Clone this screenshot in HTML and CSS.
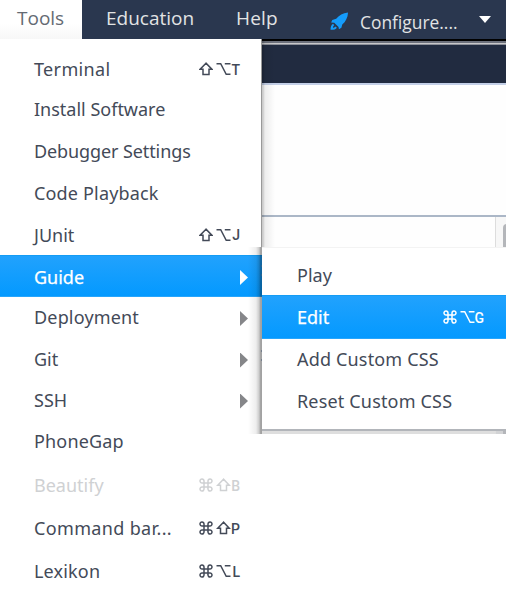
FILE: index.html
```html
<!DOCTYPE html>
<html lang="en">
<head>
<meta charset="utf-8">
<title>Tools menu</title>
<link rel="stylesheet" href="styles.css">
</head>
<body>
<svg class="defs" aria-hidden="true">
  <symbol id="shift" viewBox="0 0 14 14"><path d="M7 1.2 1.2 7.2H4V12.6H10V7.2H12.8Z"/></symbol>
  <symbol id="option" viewBox="0 0 15 14"><path d="M.5 1.7H4.7L10.2 12.3H14.5M8.8 1.7H14.5"/></symbol>
  <symbol id="command" viewBox="0 0 14 14"><path d="M5 5H3.1A2 2 0 1 1 5 3.1V10.9A2 2 0 1 1 3.1 9H10.9A2 2 0 1 1 9 10.9V3.1A2 2 0 1 1 10.9 5Z"/></symbol>
</svg>
<header class="bar">
  <div class="tab active">Tools</div>
  <div class="tab education">Education</div>
  <div class="tab help">Help</div>
  <div class="config">
    <svg class="rocket" viewBox="0 0 20 20"><path d="M19 .5C13.5 1 9.5 3.5 6.5 7.2L2.4 8.3 1.2 11 4.5 11.2 9 15.7 9.4 18.2 12 16.6 12.9 13.2C16.5 10 18.7 6 19 .5Z"/><path d="M3.2 12.4C1.2 13.5.5 16 .6 18.8 3.7 18.9 6 18.5 7.3 16.5L5.6 15.2C5 16.2 4.2 16.5 3.2 16.5 3.2 15.5 3.5 14.7 4.5 14Z"/></svg>
    <span class="title">Configure....</span>
    <i class="caret"></i>
  </div>
</header>
<main class="workspace">
  <div class="rule"></div>
  <div class="toolbar"></div>
  <div class="pane"></div>
  <div class="editor"><div class="track"><i class="thumb"></i></div></div>
</main>
<nav class="menu">
  <div class="row"><span class="label loose">Terminal</span><span class="keys"><svg><use href="#shift"/></svg><svg><use href="#option"/></svg><b>T</b></span></div>
  <div class="row"><span class="label">Install Software</span></div>
  <div class="row"><span class="label tight">Debugger Settings</span></div>
  <div class="row"><span class="label airy">Code Playback</span></div>
  <div class="row"><span class="label low">JUnit</span><span class="keys"><svg><use href="#shift"/></svg><svg><use href="#option"/></svg><b>J</b></span></div>
  <div class="row selected"><span class="label">Guide</span><i class="arrow"></i></div>
  <div class="row"><span class="label airy">Deployment</span><i class="arrow"></i></div>
  <div class="row"><span class="label">Git</span><i class="arrow"></i></div>
  <div class="row"><span class="label">SSH</span><i class="arrow"></i></div>
  <div class="row"><span class="label airy">PhoneGap</span></div>
  <div class="row disabled"><span class="label">Beautify</span><span class="keys"><svg><use href="#command"/></svg><svg><use href="#shift"/></svg><b>B</b></span></div>
  <div class="row"><span class="label loose">Command bar...</span><span class="keys"><svg><use href="#command"/></svg><svg><use href="#shift"/></svg><b>P</b></span></div>
  <div class="row"><span class="label airy">Lexikon</span><span class="keys"><svg><use href="#command"/></svg><svg><use href="#option"/></svg><b>L</b></span></div>
</nav>
<div class="shade"><i class="mark"></i><i class="mark"></i></div>
<nav class="submenu">
  <div class="row"><span class="label low">Play</span></div>
  <div class="row selected"><span class="label">Edit</span><span class="keys"><svg><use href="#command"/></svg><svg><use href="#option"/></svg><b>G</b></span></div>
  <div class="row"><span class="label airy">Add Custom CSS</span></div>
  <div class="row"><span class="label airy">Reset Custom CSS</span></div>
</nav>
</body>
</html>
```

FILE: styles.css
```css
* { box-sizing: border-box; }
body {
  margin: 0;
  width: 506px;
  height: 590px;
  position: relative;
  overflow: hidden;
  background: #fff;
  color: #434a58;
  font: 18px/24px "Noto Sans", "Open Sans", sans-serif;
}
.defs { position: absolute; width: 0; height: 0; }

.bar { display: flex; height: 39px; background: #2a374f; color: #e2e3e4; font-family: "Open Sans", sans-serif; font-size: 19px; }
.tab { padding-top: 6px; white-space: nowrap; }
.active { width: 82px; padding-left: 17px; background: linear-gradient(#fff 60%, #f7f7f7); color: #646a73; }
.education { width: 154px; padding-left: 24px; }
.help { width: 94px; letter-spacing: .2px; }
.config { display: flex; padding-top: 10px; white-space: nowrap; }
.rocket { width: 19px; height: 19px; margin: 2px 11px 0 0; fill: #159cfb; }
.title { width: 119px; transform: scaleX(.915); transform-origin: left; }
.caret { width: 12px; height: 7px; margin-top: 6px; background: #fff; clip-path: polygon(0 0, 100% 0, 50% 100%); }

.workspace { margin-left: 262px; height: 395px; background: #fff; }
.rule { height: 6px; background: linear-gradient(#000 0 2px, #6c707b 2px 4px, #c8c8ca 4px 5px, #8c8f98 5px); }
.toolbar { height: 40px; background: #212b40; border-bottom: 2px solid #c3cfe7; }
.pane { height: 132px; background: #fefefe; border-bottom: 2px solid #abb7c7; }
.editor { display: flex; justify-content: flex-end; height: 217px; background: linear-gradient(#fefefe 205px, #dedede 213px); }
.track { width: 11px; padding: 7px 0 0 7px; border-left: 1px solid #ddd; background: linear-gradient(#f7f7f7 205px, #d2d3d5 213px); }
.thumb { display: block; width: 8px; height: 210px; border-radius: 4px 0 0 0; background: #b4b6ba; }

.menu {
  position: absolute;
  top: 39px;
  left: 0;
  width: 262px;
  height: 551px;
  overflow: hidden;
  padding-top: 10px;
  display: grid;
  grid-template-rows: 40px 41px 42px 42px 41px 42px 41px 42px 40px 43px 44px 42px 44px;
  background: #fff;
}
.row { display: flex; align-items: center; justify-content: space-between; padding: 0 21px 0 34px; white-space: nowrap; }
.label { padding-bottom: 1px; }
.tight { letter-spacing: -.1px; }
.airy { letter-spacing: .17px; }
.loose { letter-spacing: .35px; }
.selected { color: #fff; background: linear-gradient(#22a2fd, #0399ff); box-shadow: inset 0 1px #149cf4, inset 0 -1px #27a5fb; }
.selected .label { padding: 1px 0 0; -webkit-text-stroke: .25px; }
.label.low { padding: 1px 0 0; }
.disabled { color: #cfd1d3; }
.keys { display: flex; align-items: center; width: 42px; }
.keys svg { width: 14px; height: 14px; margin-right: 3px; fill: none; stroke: currentColor; stroke-width: 1.5; }
.keys svg + svg { width: 15px; margin-right: 0; }
.keys b { display: flex; justify-content: flex-end; width: 9px; font: 500 14px/14px Roboto, sans-serif; padding-top: 1px; }
.arrow { width: 8px; height: 15px; margin: 2px -7px 0 0; background: #858689; clip-path: polygon(0 0, 100% 50%, 0 100%); }
.selected .arrow { background: #fff; margin-top: 3px; }

.shade {
  position: absolute;
  top: 39px;
  left: 248px;
  width: 28px;
  height: 395px;
  padding: 226px 0 0 13px;
  background:
    linear-gradient(90deg, #0006 0 1px, #0003 1px 2px, #0001 4px, #0000) 13px 0 / 14px 208px no-repeat,
    linear-gradient(90deg, #0000, #0001 8px, #0003 11px, #0006 13px, #0005) 0 208px / 14px 187px no-repeat;
}
.mark { display: block; width: 2px; height: 11px; margin-bottom: 74px; border: solid #4c617b88; border-width: 2px 0; }
.submenu {
  position: absolute;
  top: 247px;
  left: 262px;
  width: 244px;
  height: 182px;
  padding-top: 5px;
  display: grid;
  grid-template-rows: 42px 44px 41px 43px;
  background: #fff;
  border-top: 1px solid #f3f3f3;
  box-shadow: 0 2px #b2b5ba;
}
.submenu .row { padding-left: 35px; padding-right: 21px; }
.submenu .row:not(.selected) .label:not(.low) { padding-bottom: 2px; }
.submenu .selected .label { padding: 0 0 1px; }
```
